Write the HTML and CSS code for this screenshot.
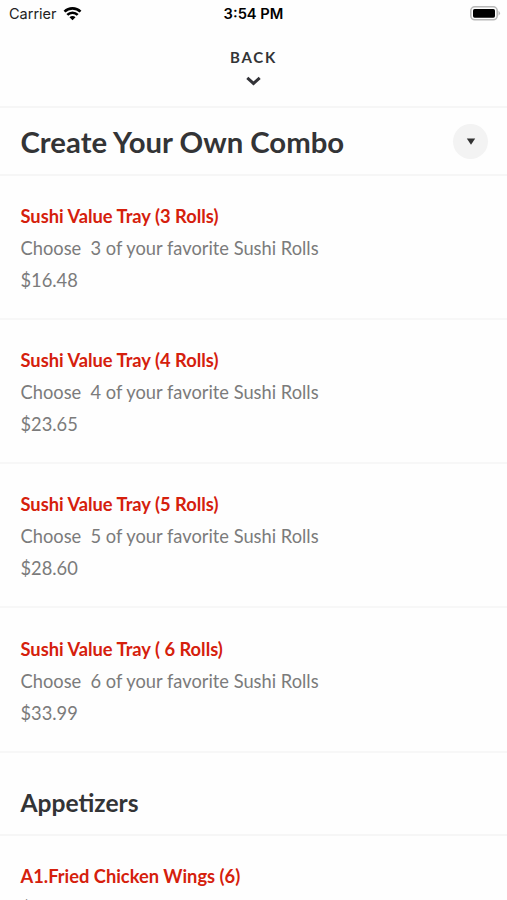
FILE: index.html
```html
<!DOCTYPE html>
<html lang="en">
<head>
<meta charset="utf-8">
<title>Menu</title>
<link rel="stylesheet" href="styles.css">
</head>
<body>
<div class="status">
  <div class="carrier"><span>Carrier</span><svg width="19" height="14" viewBox="0 0 18 14" fill="none" stroke="#000" stroke-width="2.6"><path d="M1 4.7a11.3 11.3 0 0 1 16 0M3.8 7.9a7.4 7.4 0 0 1 10.4 0"/><path d="M6 10.2a4.2 4.2 0 0 1 6 0L9 13.2z" fill="#000" stroke="none"/></svg></div>
  <div class="time">3:54 PM</div>
  <svg class="battery" width="31" height="15" viewBox="0 0 31 15"><rect x=".8" y=".8" width="26.4" height="13" rx="4" fill="none" stroke="#b8b8b8" stroke-width="1.6"/><rect x="3" y="3" width="22" height="8.7" rx="1.6"/><path d="M28.5 4.8q3 2.5 0 5z" fill="#b8b8b8"/></svg>
</div>
<header class="back"><span>BACK</span><svg width="16" height="10" viewBox="0 0 16 10" fill="none" stroke="#333338" stroke-width="3"><path d="M1.3 1.9l6.2 5.5 6.2-5.5"/></svg></header>
<section class="category"><h1>Create Your Own Combo</h1><button class="toggle" aria-label="Categories"><svg width="10" height="7" viewBox="0 0 10 7"><path d="M.8.5h8.4L5 6.7z" fill="#333"/></svg></button></section>
<main>
  <article class="item"><h3>Sushi Value Tray (3 Rolls)</h3><p>Choose  3 of your favorite Sushi Rolls</p><p class="price">$16.48</p></article>
  <article class="item"><h3>Sushi Value Tray (4 Rolls)</h3><p>Choose  4 of your favorite Sushi Rolls</p><p class="price">$23.65</p></article>
  <article class="item"><h3>Sushi Value Tray (5 Rolls)</h3><p>Choose  5 of your favorite Sushi Rolls</p><p class="price">$28.60</p></article>
  <article class="item"><h3>Sushi Value Tray ( 6 Rolls)</h3><p>Choose  6 of your favorite Sushi Rolls</p><p class="price">$33.99</p></article>
  <h2>Appetizers</h2>
  <article class="item"><h3>A1.Fried Chicken Wings (6)</h3><p class="price">$</p></article>
</main>
</body>
</html>
```

FILE: styles.css
```css
* { box-sizing: border-box; margin: 0; padding: 0; }
body { height: 900px; overflow: hidden; background: #fefefe; font-family: Lato, sans-serif; color: #333436; }
.status { display: grid; grid-template-columns: 1fr auto 1fr; align-items: center; height: 28px; padding: 0 6px 0 9px; font: 14.5px/28px Inter, sans-serif; color: #000; }
.carrier { display: flex; align-items: center; gap: 6px; color: #222; }
.carrier svg { margin-top: -1px; }
.time { font-weight: 600; font-size: 14.7px; margin-left: -3px; }
.battery { justify-self: end; margin-top: -1px; }
.back { display: flex; flex-direction: column; align-items: center; height: 80px; padding-top: 19px; gap: 9px; border-bottom: 2px solid #f6f6f6; font-weight: 700; font-size: 15px; line-height: 20px; letter-spacing: 1.8px; }
.category { display: flex; align-items: center; justify-content: space-between; height: 68px; padding: 2px 19px 0 20.5px; border-bottom: 2px solid #f6f6f6; }
h1 { font-size: 29.3px; line-height: 34px; font-weight: 700; }
.toggle { display: grid; place-items: center; width: 35px; height: 35px; margin-top: -2px; border: 0; border-radius: 50%; background: #f3f3f3; }
.item { height: 144.15px; padding: 24.2px 20.5px 0; border-bottom: 2px solid #f7f7f7; font-size: 18.3px; line-height: 32px; white-space: pre; }
.item h3 { font-size: 18.3px; font-weight: 700; color: #d5200c; }
.item p { color: #7b7b7b; }
h2 { height: 83px; padding: 33px 20.5px 0; border-bottom: 2px solid #f6f6f6; font-size: 24.6px; line-height: 34px; font-weight: 700; }
```
